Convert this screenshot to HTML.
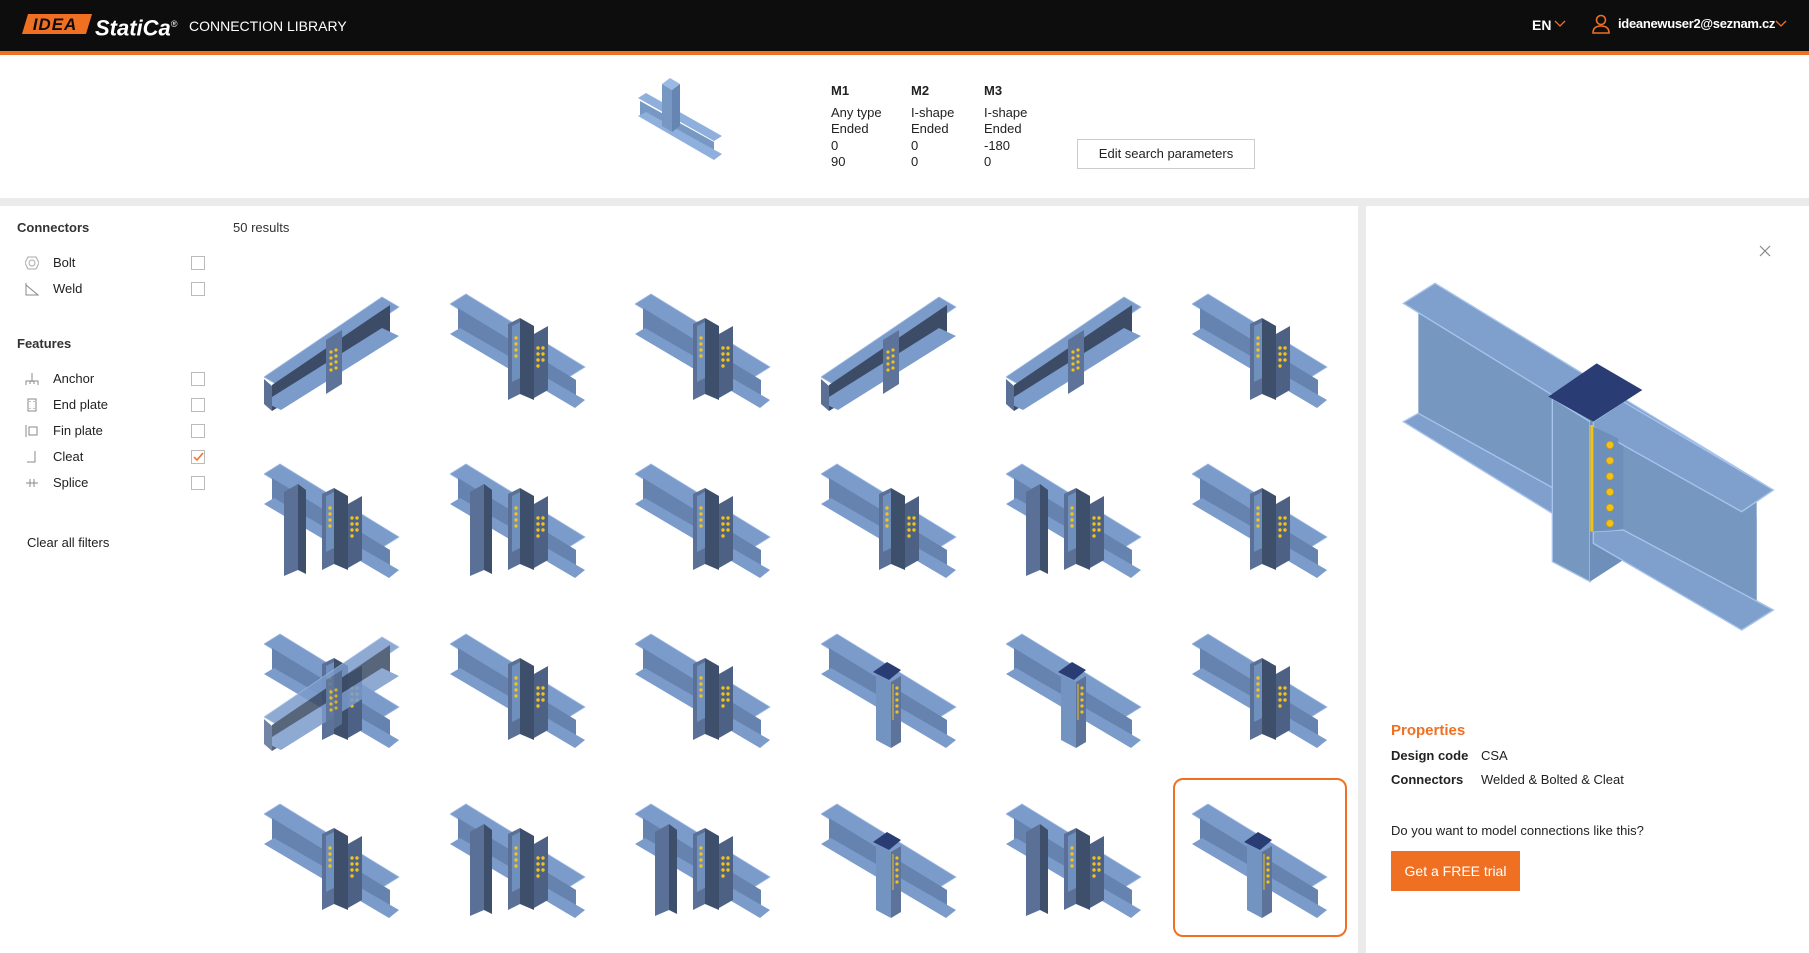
<!DOCTYPE html>
<html><head><meta charset="utf-8"><style>
*{margin:0;padding:0;box-sizing:border-box}
body{width:1809px;height:953px;overflow:hidden;background:#fff;font-family:"Liberation Sans",sans-serif;color:#222;position:relative}
.a{position:absolute}
.hdr{left:0;top:0;width:1809px;height:51px;background:#0d0d0d}
.or{left:0;top:51px;width:1809px;height:4px;background:#f07023}
.t{position:absolute;white-space:nowrap;font-size:13px;line-height:16px}
.cb{position:absolute;left:191px;width:14px;height:14px;border:1px solid #bbb;background:#fff}
.ic{position:absolute;left:25px;width:14px;height:14px}
.cell{position:absolute;width:150px;height:130px}
</style></head><body>
<div class="a hdr"></div><div class="a or"></div>
<svg class="a" style="left:22px;top:13px" width="70" height="22" viewBox="0 0 70 22"><polygon points="6,1 70,1 64,21 0,21" fill="#f07023"/><text x="33" y="17" text-anchor="middle" font-family="Liberation Sans" font-weight="bold" font-style="italic" font-size="17" fill="#0d0d0d" letter-spacing="1">IDEA</text></svg>
<div class="t" style="left:95px;top:11px;color:#fff;font-size:22px;line-height:26px;font-weight:bold;font-style:italic">StatiCa<sup style="font-size:9px;font-weight:normal">®</sup></div>
<div class="t" style="left:189px;top:18px;color:#fff;font-size:14px">CONNECTION LIBRARY</div>
<div class="t" style="left:1532px;top:17px;color:#fff;font-size:14px;font-weight:bold">EN</div>
<svg class="a" style="left:1554px;top:20px" width="12" height="8"><polyline points="1,1 6,6 11,1" fill="none" stroke="#f07023" stroke-width="1.3"/></svg>
<svg class="a" style="left:1591px;top:14px" width="20" height="20"><circle cx="10" cy="6" r="4.5" fill="none" stroke="#f07023" stroke-width="1.6"/><path d="M2 19 Q2 12 10 12 Q18 12 18 19 Z" fill="none" stroke="#f07023" stroke-width="1.6"/></svg>
<div class="t" style="left:1618px;top:16px;color:#fff;font-size:13px;font-weight:bold;letter-spacing:-0.3px">ideanewuser2@seznam.cz</div>
<svg class="a" style="left:1775px;top:20px" width="12" height="8"><polyline points="1,1 6,6 11,1" fill="none" stroke="#f07023" stroke-width="1.3"/></svg>

<svg class="a" style="left:636px;top:76px" width="88" height="88" viewBox="0 0 88 88">
<polygon points="2,22 10,17 86,60 78,65" fill="#8fb0dc"/>
<polygon points="4,25 78,66 78,80 4,40" fill="#7898c4"/>
<polygon points="2,40 10,36 86,78 78,84" fill="#8fb0dc"/>
<polygon points="26,8 34,2 44,8 36,14" fill="#9ab9e4"/>
<polygon points="26,8 36,14 36,56 26,50" fill="#7898c4"/>
<polygon points="36,14 44,8 44,50 36,56" fill="#6585b2"/>
</svg>
<div class="t" style="left:831px;top:83px;font-weight:bold">M1</div>
<div class="t" style="left:911px;top:83px;font-weight:bold">M2</div>
<div class="t" style="left:984px;top:83px;font-weight:bold">M3</div>
<div class="t" style="left:831px;top:105px;font-size:13px;line-height:16.3px">Any type<br>Ended<br>0<br>90</div>
<div class="t" style="left:911px;top:105px;font-size:13px;line-height:16.3px">I-shape<br>Ended<br>0<br>0</div>
<div class="t" style="left:984px;top:105px;font-size:13px;line-height:16.3px">I-shape<br>Ended<br>-180<br>0</div>
<div class="a" style="left:1077px;top:139px;width:178px;height:30px;border:1px solid #ccc;font-size:13px;line-height:28px;text-align:center">Edit search parameters</div>

<div class="a" style="left:0;top:198px;width:1809px;height:8px;background:#ebebeb"></div>
<div class="a" style="left:1358px;top:206px;width:8px;height:747px;background:#ebebeb"></div>

<div class="t" style="left:17px;top:220px;font-weight:bold;color:#333">Connectors</div>
<div class="t" style="left:233px;top:220px;color:#333">50 results</div>
<svg class="ic" style="top:256px"><polygon points="3,1 11,1 14,7 11,13 3,13 0,7" fill="none" stroke="#aaa"/><circle cx="7" cy="7" r="3" fill="none" stroke="#aaa"/></svg>
<div class="t" style="left:53px;top:255px">Bolt</div><div class="cb" style="top:256px"></div>
<svg class="ic" style="top:282px"><path d="M1 1 V13 H13 L1 3" fill="none" stroke="#888"/></svg>
<div class="t" style="left:53px;top:281px">Weld</div><div class="cb" style="top:282px"></div>
<div class="t" style="left:17px;top:336px;font-weight:bold;color:#333">Features</div>
<svg class="ic" style="top:372px"><path d="M7 1 V10 M1 13 V9 H13 V13 M5 9 V12 M9 9 V12" fill="none" stroke="#888"/></svg>
<div class="t" style="left:53px;top:371px">Anchor</div><div class="cb" style="top:372px"></div>
<svg class="ic" style="top:398px"><rect x="3" y="1" width="8" height="12" fill="none" stroke="#888"/><path d="M5 3v1M9 3v1M5 10v1M9 10v1" stroke="#888"/></svg>
<div class="t" style="left:53px;top:397px">End plate</div><div class="cb" style="top:398px"></div>
<svg class="ic" style="top:424px"><path d="M1 1V13M4 3H12V11H4Z" fill="none" stroke="#888"/></svg>
<div class="t" style="left:53px;top:423px">Fin plate</div><div class="cb" style="top:424px"></div>
<svg class="ic" style="top:450px"><path d="M10 1V12H2" fill="none" stroke="#888"/></svg>
<div class="t" style="left:53px;top:449px">Cleat</div>
<div class="cb" style="top:450px"><svg width="12" height="12" style="position:absolute;left:0;top:0"><polyline points="2,6 5,9 11,2" fill="none" stroke="#f07023" stroke-width="1.5"/></svg></div>
<svg class="ic" style="top:476px"><path d="M1 7H13M5 3V11M9 3V11" fill="none" stroke="#888"/></svg>
<div class="t" style="left:53px;top:475px">Splice</div><div class="cb" style="top:476px"></div>
<div class="t" style="left:27px;top:535px">Clear all filters</div>

<svg width="0" height="0" style="position:absolute">
<defs>
<g id="A">
<polygon points="0,95 118,15 135,25 17,105" fill="#7b9bcb" stroke="#9cb8e2" stroke-width=".8"/>
<polygon points="8,103 126,23 126,57 8,129" fill="#3c4c66"/>
<polygon points="0,120 118,46 135,54 17,128" fill="#7b9bcb"/>
<polygon points="8,104 8,129 0,122 0,97" fill="#5a7096"/>
<polygon points="62,58 78,48 78,102 62,112" fill="#5d7399"/>
<g fill="#f2c21a"><circle cx="67" cy="70" r="1.6"/><circle cx="67" cy="76" r="1.6"/><circle cx="67" cy="82" r="1.6"/><circle cx="67" cy="88" r="1.6"/><circle cx="72" cy="68" r="1.6"/><circle cx="72" cy="74" r="1.6"/><circle cx="72" cy="80" r="1.6"/><circle cx="72" cy="86" r="1.6"/></g>
</g>
<g id="B">
<polygon points="0,22 16,12 135,85 119,95" fill="#7b9bcb" stroke="#9cb8e2" stroke-width=".8"/>
<polygon points="8,26 126,98 126,122 8,52" fill="#6583ae"/>
<polygon points="0,52 10,46 135,118 125,126" fill="#7b9bcb"/>
<polygon points="58,42 70,36 70,112 58,118" fill="#5a7096"/>
<polygon points="70,36 84,44 84,118 70,112" fill="#3e4f6b"/>
<polygon points="84,52 98,44 98,108 84,116" fill="#4d6184"/>
<polygon points="62,44 70,40 70,96 62,100" fill="#6f8fbc"/>
<g fill="#f2c21a"><circle cx="66" cy="56" r="1.7"/><circle cx="66" cy="62" r="1.7"/><circle cx="66" cy="68" r="1.7"/><circle cx="66" cy="74" r="1.7"/><circle cx="88" cy="66" r="1.7"/><circle cx="88" cy="72" r="1.7"/><circle cx="88" cy="78" r="1.7"/><circle cx="88" cy="84" r="1.7"/><circle cx="93" cy="66" r="1.7"/><circle cx="93" cy="72" r="1.7"/><circle cx="93" cy="78" r="1.7"/></g>
</g>
<g id="C">
<use href="#B"/>
<polygon points="20,40 34,32 34,118 20,124" fill="#5a7096"/>
<polygon points="34,32 42,38 42,122 34,118" fill="#3e4f6b"/>
</g>
<g id="D">
<polygon points="0,22 16,12 135,85 119,95" fill="#7b9bcb" stroke="#9cb8e2" stroke-width=".8"/>
<polygon points="8,26 126,98 126,122 8,52" fill="#6583ae"/>
<polygon points="0,52 10,46 135,118 125,126" fill="#7b9bcb"/>
<polygon points="55,52 70,60 70,126 55,118" fill="#7393c0"/>
<polygon points="70,60 80,54 80,120 70,126" fill="#5d7399"/>
<polygon points="52,50 66,40 80,48 68,58" fill="#2a3c74"/>
<line x1="72" y1="62" x2="72" y2="98" stroke="#f2c21a" stroke-width="1"/>
<g fill="#f2c21a"><circle cx="76" cy="66" r="1.6"/><circle cx="76" cy="72" r="1.6"/><circle cx="76" cy="78" r="1.6"/><circle cx="76" cy="84" r="1.6"/><circle cx="76" cy="90" r="1.6"/></g>
</g>
</defs></svg>

<svg class="cell" style="left:264px;top:282px" viewBox="0 0 150 130"><use href="#A"/></svg>
<svg class="cell" style="left:450px;top:282px" viewBox="0 0 150 130"><use href="#B"/></svg>
<svg class="cell" style="left:635px;top:282px" viewBox="0 0 150 130"><use href="#B"/></svg>
<svg class="cell" style="left:821px;top:282px" viewBox="0 0 150 130"><use href="#A"/></svg>
<svg class="cell" style="left:1006px;top:282px" viewBox="0 0 150 130"><use href="#A"/></svg>
<svg class="cell" style="left:1192px;top:282px" viewBox="0 0 150 130"><use href="#B"/></svg>
<svg class="cell" style="left:264px;top:452px" viewBox="0 0 150 130"><use href="#C"/></svg>
<svg class="cell" style="left:450px;top:452px" viewBox="0 0 150 130"><use href="#C"/></svg>
<svg class="cell" style="left:635px;top:452px" viewBox="0 0 150 130"><use href="#B"/></svg>
<svg class="cell" style="left:821px;top:452px" viewBox="0 0 150 130"><use href="#B"/></svg>
<svg class="cell" style="left:1006px;top:452px" viewBox="0 0 150 130"><use href="#C"/></svg>
<svg class="cell" style="left:1192px;top:452px" viewBox="0 0 150 130"><use href="#B"/></svg>
<svg class="cell" style="left:264px;top:622px" viewBox="0 0 150 130"><use href="#B"/><use href="#A" opacity=".85"/></svg>
<svg class="cell" style="left:450px;top:622px" viewBox="0 0 150 130"><use href="#B"/></svg>
<svg class="cell" style="left:635px;top:622px" viewBox="0 0 150 130"><use href="#B"/></svg>
<svg class="cell" style="left:821px;top:622px" viewBox="0 0 150 130"><use href="#D"/></svg>
<svg class="cell" style="left:1006px;top:622px" viewBox="0 0 150 130"><use href="#D"/></svg>
<svg class="cell" style="left:1192px;top:622px" viewBox="0 0 150 130"><use href="#B"/></svg>
<svg class="cell" style="left:264px;top:792px" viewBox="0 0 150 130"><use href="#B"/></svg>
<svg class="cell" style="left:450px;top:792px" viewBox="0 0 150 130"><use href="#C"/></svg>
<svg class="cell" style="left:635px;top:792px" viewBox="0 0 150 130"><use href="#C"/></svg>
<svg class="cell" style="left:821px;top:792px" viewBox="0 0 150 130"><use href="#D"/></svg>
<svg class="cell" style="left:1006px;top:792px" viewBox="0 0 150 130"><use href="#C"/></svg>
<svg class="cell" style="left:1192px;top:792px" viewBox="0 0 150 130"><use href="#D"/></svg>
<div class="a" style="left:1173px;top:778px;width:174px;height:159px;border:2px solid #f07023;border-radius:10px"></div>

<svg class="a" style="left:1759px;top:245px" width="12" height="12"><path d="M1 1L11 11M11 1L1 11" stroke="#888" stroke-width="1.2"/></svg>
<svg class="a" style="left:1390px;top:270px" width="400" height="370" viewBox="0 0 1200 1110">
<polygon points="85,130 1100,690 1100,1030 85,460" fill="#7698c0"/>
<polygon points="40,100 135,40 1150,660 1055,725" fill="#7fa0cc" stroke="#a8c4ec" stroke-width="4"/>
<polygon points="40,455 85,430 1150,1020 1055,1080" fill="#7fa0cc" stroke="#a8c4ec" stroke-width="4"/>
<polygon points="610,470 1100,740 1100,1030 610,780" fill="#7698c0"/>
<polygon points="487,385 600,455 600,935 487,875" fill="#7698c0" stroke="#a8c4ec" stroke-width="4"/>
<polygon points="600,455 700,395 700,870 600,935" fill="#6e8fba"/>
<polygon points="610,455 700,395 1150,660 1055,725 690,520 610,470" fill="#7fa0cc" stroke="#a8c4ec" stroke-width="4"/>
<polygon points="610,785 700,780 1150,1020 1055,1080 610,820" fill="#7fa0cc" stroke="#a8c4ec" stroke-width="4"/>
<polygon points="610,470 685,505 685,780 610,785" fill="#6e8fba"/>
<polygon points="475,380 620,280 757,360 610,455" fill="#2a3c74"/>
<rect x="601" y="465" width="9" height="320" fill="#f2c21a"/>
<g fill="#f2c21a" stroke="#c89a00" stroke-width="2"><circle cx="660" cy="525" r="11"/><circle cx="660" cy="572" r="11"/><circle cx="660" cy="619" r="11"/><circle cx="660" cy="666" r="11"/><circle cx="660" cy="713" r="11"/><circle cx="660" cy="760" r="11"/></g>
</svg>
<div class="t" style="left:1391px;top:723px;color:#f07023;font-size:15px;font-weight:bold">Properties</div>
<div class="t" style="left:1391px;top:748px;font-weight:bold">Design code</div>
<div class="t" style="left:1481px;top:748px">CSA</div>
<div class="t" style="left:1391px;top:772px;font-weight:bold">Connectors</div>
<div class="t" style="left:1481px;top:772px">Welded &amp; Bolted &amp; Cleat</div>
<div class="t" style="left:1391px;top:823px">Do you want to model connections like this?</div>
<div class="a" style="left:1391px;top:851px;width:129px;height:40px;background:#f07023;color:#fff;font-size:14px;line-height:40px;text-align:center">Get a FREE trial</div>
</body></html>
